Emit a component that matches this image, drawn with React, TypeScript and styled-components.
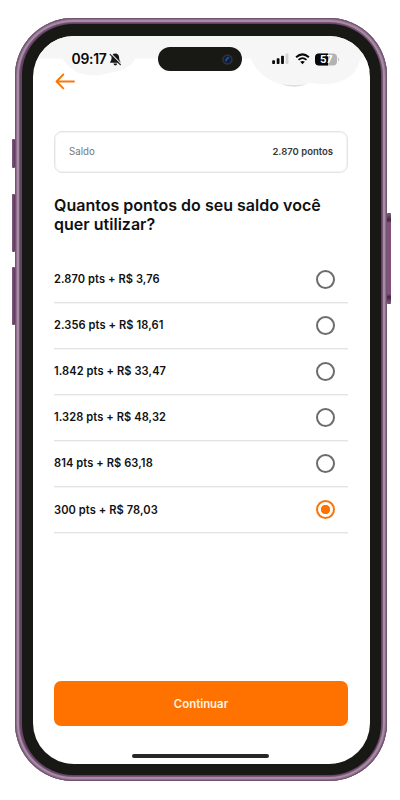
import React, { useState } from "react";
import styled, { createGlobalStyle } from "styled-components";

const GlobalStyle = createGlobalStyle`
  body { margin: 0; background: #fff; font-family: Inter, "Liberation Sans", sans-serif; color: #111; }
  * { box-sizing: border-box; }
`;

const Stage = styled.main`
  position: relative;
  width: 400px;
  height: 800px;
  padding: 18px 0 0 15px;
  overflow: hidden;
  background: #fff;
`;

const Phone = styled.div`
  position: relative;
  width: 372px;
  height: 763px;
  padding: 6px 6px 6px 7px;
  border-radius: 58px;
  background: #634363;
  box-shadow: inset 0 0 0 1px #73536f, inset 0 0 0 2px #8d708b, inset 0 0 0 4px #a68da5, inset 0 0 0 5px #795478;
`;

const Bezel = styled.div`
  height: 100%;
  padding: 11.5px 11px;
  border-radius: 51px;
  background: #181814;
`;

const Screen = styled.div`
  position: relative;
  display: flex;
  flex-direction: column;
  height: 100%;
  border-radius: 41px;
  overflow: hidden;
  background: #fff;
`;

const SideKey = styled.i<{ $side: "left" | "right"; $top: number; $length: number }>`
  position: absolute;
  top: ${(p) => p.$top}px;
  ${(p) => p.$side}: ${(p) => (p.$side === "left" ? "-3px" : "-4px")};
  width: ${(p) => (p.$side === "left" ? 3 : 4)}px;
  height: ${(p) => p.$length}px;
  border-radius: 1px;
  background: ${(p) =>
    p.$side === "left"
      ? "linear-gradient(90deg, #805a7c, #5b3758)"
      : "linear-gradient(#80587c, #3f263e 6px, #80517c 9px, #80517c calc(100% - 9px), #3f263e calc(100% - 6px), #80587c)"};
  border: solid #6b4768;
  border-width: 1px 0;
`;

const Haze = styled.svg`
  position: absolute;
  top: 0;
  left: 0;
`;

const StatusBar = styled.header`
  position: relative;
  display: flex;
  align-items: center;
  height: 47px;
  padding: 0 30px 0 38.5px;
`;

const Clock = styled.time`
  width: 37.5px;
  font-size: 13.9px;
  font-weight: 600;
  letter-spacing: -0.25px;
  color: #080808;
`;

const Island = styled.div`
  display: flex;
  align-items: center;
  justify-content: flex-end;
  width: 84px;
  height: 24px;
  margin-left: 36px;
  padding-right: 9px;
  border-radius: 12px;
  background: #181814;
`;

const Indicators = styled.div`
  display: flex;
  align-items: center;
  gap: 5.5px;
  margin-left: auto;
`;

const BackButton = styled.button`
  position: relative;
  display: flex;
  width: 21px;
  height: 17px;
  margin: -10px 0 1px 21.5px;
  padding: 0;
  border: 0;
  background: none;
`;

const Content = styled.div`
  display: flex;
  flex-direction: column;
  flex: 1;
  padding: 40px 22px 0 21px;
`;

const BalanceCard = styled.section`
  display: flex;
  align-items: center;
  justify-content: space-between;
  height: 42px;
  padding: 0 14px;
  border: 1px solid #e4e4e4;
  border-radius: 8px;
  box-shadow: inset 0 0 0 1px #f4f4f4;
`;

const BalanceLabel = styled.span`
  font-size: 9.7px;
  color: #777;
`;

const BalanceValue = styled.strong`
  font-size: 9.5px;
  font-weight: 600;
  color: #383838;
`;

const Title = styled.h1`
  margin: 23px 0 0;
  font-size: 16px;
  line-height: 19.5px;
  font-weight: 600;
  letter-spacing: 0.02px;
  color: #111;
  white-space: nowrap;
`;

const Options = styled.ul`
  margin: 22px 0 0;
  padding: 0;
  list-style: none;
`;

const Option = styled.li`
  display: flex;
  align-items: center;
  justify-content: space-between;
  height: 46.1px;
  padding-right: 13px;
  border-bottom: 1px solid #e4e4e4;
  box-shadow: 0 1px #f4f4f4;
  font-size: 11.1px;
  font-weight: 600;
  letter-spacing: 0.08px;
`;

const Radio = styled.button<{ $checked: boolean }>`
  width: 19px;
  height: 19px;
  padding: 0;
  border: 2px solid ${(p) => (p.$checked ? "#fa7506" : "#6c6c6c")};
  border-radius: 50%;
  background: ${(p) => (p.$checked ? "radial-gradient(circle, #ff7200 4.3px, #fff 5px)" : "#fff")};
`;

const Continue = styled.button`
  height: 45px;
  margin-top: auto;
  border: 0;
  border-radius: 7px;
  background: #ff7200;
  color: #fff4e5;
  font: 600 11.4px Inter, sans-serif;
`;

const HomeIndicator = styled.div`
  width: 137px;
  height: 4px;
  margin: 28px auto 5.5px 99px;
  border-radius: 2px;
  background: #262626;
`;

const options = [
  "2.870 pts + R$ 3,76",
  "2.356 pts + R$ 18,61",
  "1.842 pts + R$ 33,47",
  "1.328 pts + R$ 48,32",
  "814 pts + R$ 63,18",
  "300 pts + R$ 78,03",
];

const StatusHaze = () => (
  <Haze width="338" height="54" viewBox="33 35.5 338 54">
    <g fill="#f6f6f6">
      <path d="M33 35H371V58H33Z" />
      <path d="M61 56C69 69 80 75 93 75C103 75 109 72 116 71C125 69 134 64 136 56Z" />
      <path d="M250 56C256 71 265 78 276 82C287 87 300 86 311 82C322 85 337 84 347 78C355 73 359 66 361 57Z" />
      <path d="M281 83.5Q294 89 307 83.5Q294 86 281 83.5Z" fill="#dcdcdc" />
    </g>
    <path d="M361 57H371V70H356Z" fill="#fff" />
  </Haze>
);

const MutedBell = () => (
  <svg width="13" height="13" viewBox="0 0 13 13">
    <path d="M6.3 .4C3.7 .4 2.6 2.3 2.6 4.5C2.6 7 1.6 8 1 9.7H11.8C11.1 8 10.1 7 10.1 4.5C10.1 2.3 8.9 .4 6.3 .4ZM4.4 10.5H8.3Q7.8 12.6 6.3 12.6T4.4 10.5Z" fill="#161616" />
    <path d="M1.7 .4L12.6 11.3" stroke="#f6f6f6" strokeWidth="1.1" />
    <path d="M.8 1.1L11.7 12" stroke="#222" strokeWidth="1.1" />
  </svg>
);

const Camera = () => (
  <svg width="11" height="11" viewBox="0 0 11 11">
    <circle cx="5.5" cy="5.5" r="5.3" fill="#303033" />
    <circle cx="5.5" cy="5.5" r="3.6" fill="#101d38" />
    <path d="M3 6L5.6 3L7.6 3.6L5.3 5.7L4.2 7.8Z" fill="#175bad" />
  </svg>
);

const Signal = () => (
  <svg width="17" height="12" viewBox="0 0 17 12">
    <g fill="#090909">
      <rect x=".2" y="7.3" width="2.8" height="3.8" rx=".8" />
      <rect x="4.7" y="5.3" width="2.8" height="5.8" rx=".8" />
      <rect x="9.1" y="2.8" width="2.8" height="8.3" rx=".8" />
    </g>
    <rect x="13.6" y=".5" width="2.8" height="10.6" rx=".8" fill="#d4d4d4" />
  </svg>
);

const Wifi = () => (
  <svg width="15" height="12" viewBox="0 0 15 12" fill="none" stroke="#080808">
    <path d="M1.1 4.2Q7.5 -1.4 13.9 4.2" strokeWidth="2" />
    <path d="M3.5 6.9Q7.5 3.3 11.5 6.9" strokeWidth="1.8" />
    <path d="M5.2 8.8Q7.5 7 9.8 8.8L7.5 11.2Z" fill="#080808" stroke="none" />
  </svg>
);

const Battery = () => (
  <svg width="25" height="13" viewBox="0 0 25 13">
    <rect width="22" height="12" y=".5" rx="4" fill="#b3b3b3" />
    <path d="M4 .5H13V12.5H4A4 4 0 0 1 0 8.5V4.5A4 4 0 0 1 4 .5Z" fill="#080808" />
    <path d="M23 4.5Q25 6.5 23 8.5Z" fill="#b3b3b3" />
    <text x="11.2" y="10.2" textAnchor="middle" fontFamily="Inter, sans-serif" fontSize="10.2" fontWeight="700" fill="#fff">57</text>
  </svg>
);

const BackArrow = () => (
  <svg width="21" height="17" viewBox="0 0 21 17" fill="none" stroke="#f57a0a" strokeWidth="1.9" strokeLinecap="round" strokeLinejoin="round">
    <path d="M19 8.5H1.5M8.3 1.5L1.5 8.5L8.3 15.3" />
  </svg>
);

export default function App() {
  const [selected, setSelected] = useState(5);
  return (
    <Stage>
      <GlobalStyle />
      <Phone>
        <SideKey $side="left" $top={121} $length={29} />
        <SideKey $side="left" $top={176} $length={58} />
        <SideKey $side="left" $top={249} $length={58} />
        <SideKey $side="right" $top={195} $length={91} />
        <Bezel>
          <Screen>
            <StatusHaze />
            <StatusBar>
              <Clock>09:17</Clock>
              <MutedBell />
              <Island><Camera /></Island>
              <Indicators><Signal /><Wifi /><Battery /></Indicators>
            </StatusBar>
            <BackButton aria-label="Voltar"><BackArrow /></BackButton>
            <Content>
              <BalanceCard>
                <BalanceLabel>Saldo</BalanceLabel>
                <BalanceValue>2.870 pontos</BalanceValue>
              </BalanceCard>
              <Title>Quantos pontos do seu saldo você<br />quer utilizar?</Title>
              <Options>
                {options.map((label, i) => (
                  <Option key={label}>
                    <span>{label}</span>
                    <Radio $checked={selected === i} aria-label={label} onClick={() => setSelected(i)} />
                  </Option>
                ))}
              </Options>
              <Continue>Continuar</Continue>
            </Content>
            <HomeIndicator />
          </Screen>
        </Bezel>
      </Phone>
    </Stage>
  );
}
